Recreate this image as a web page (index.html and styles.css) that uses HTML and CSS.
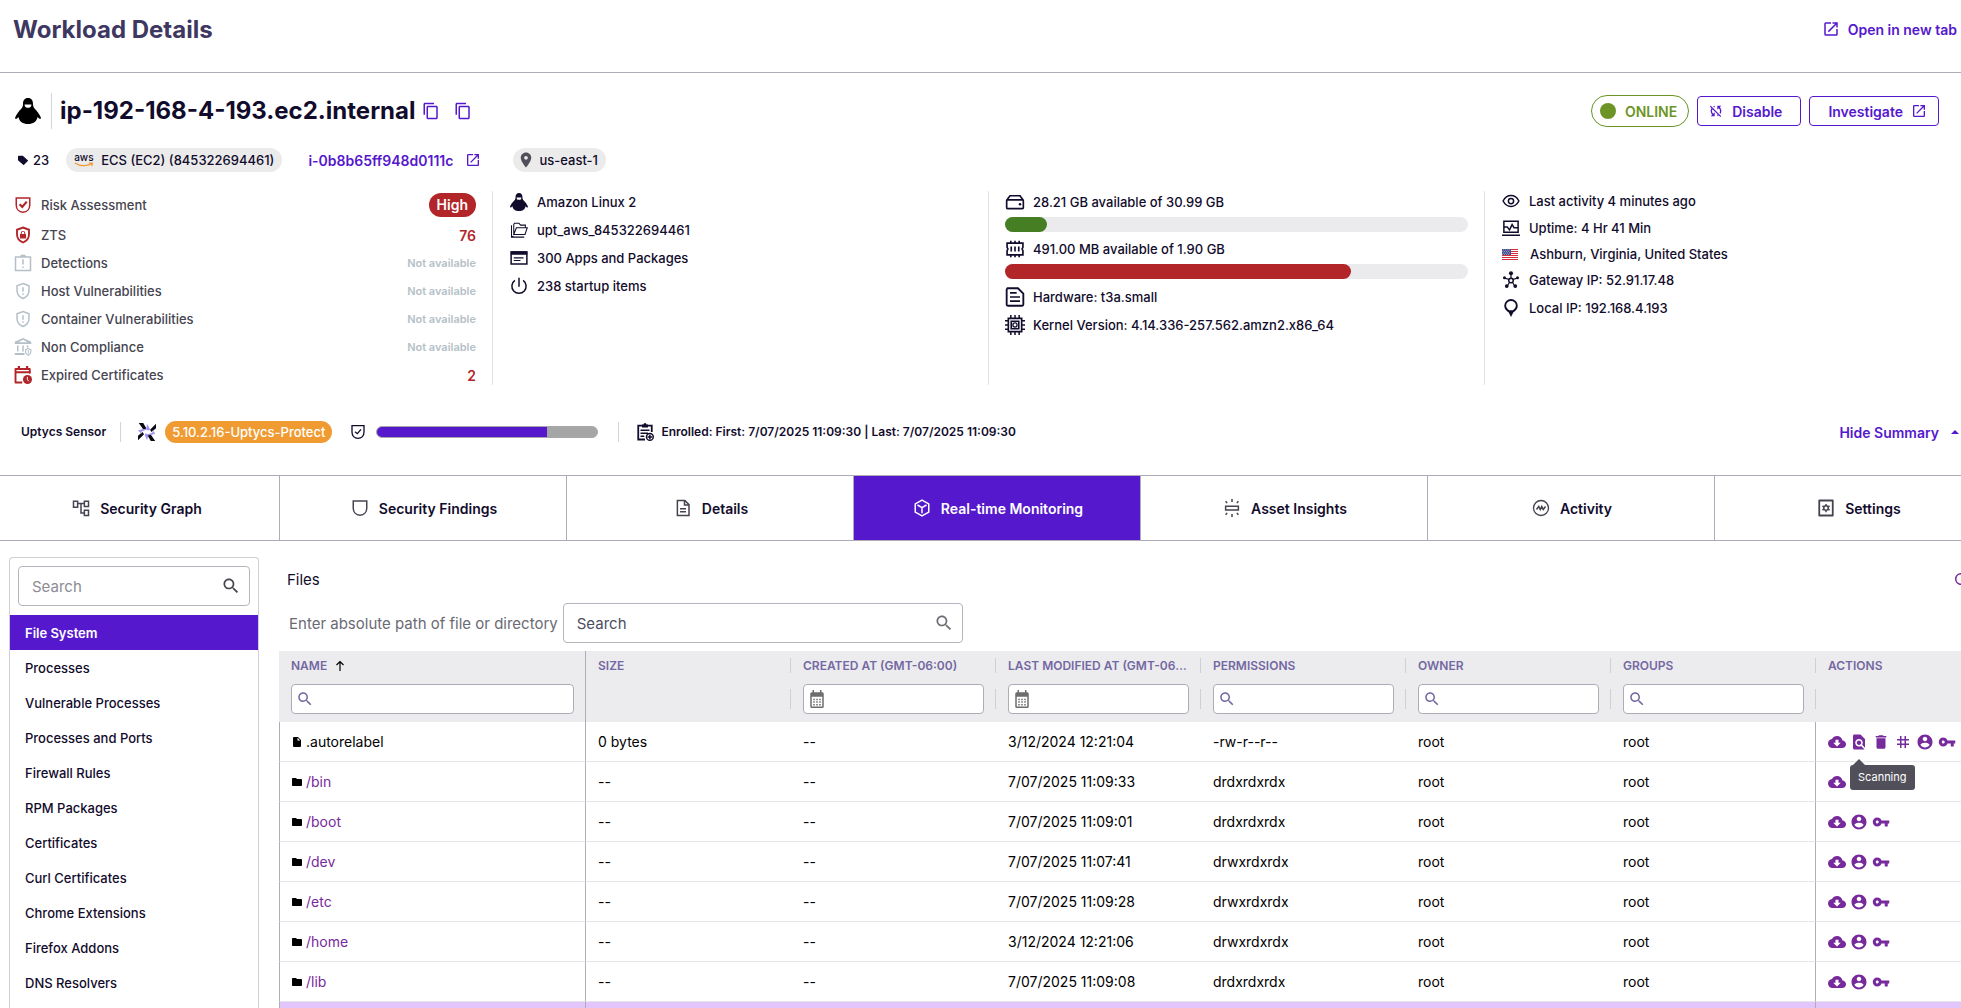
FILE: index.html
```html
<!DOCTYPE html>
<html lang="en">
<head>
  <meta charset="UTF-8" />
  <meta name="viewport" content="width=device-width, initial-scale=1.0" />
  <title>Workload Details</title>
  <link rel="stylesheet" href="styles.css">
</head>
<body>

  <!-- Icon set -->
  <svg class="sprite" aria-hidden="true">
    <symbol id="i-open" viewBox="0 0 24 24"><path d="M19 19H5V5h7V3H5a2 2 0 00-2 2v14a2 2 0 002 2h14c1.1 0 2-.9 2-2v-7h-2v7zM14 3v2h3.59l-9.83 9.83 1.41 1.41L19 6.41V10h2V3h-7z"/></symbol>
    <symbol id="i-copy" viewBox="0 0 24 24"><path d="M16 1H4c-1.1 0-2 .9-2 2v14h2V3h12V1zm3 4H8c-1.1 0-2 .9-2 2v14c0 1.1.9 2 2 2h11c1.1 0 2-.9 2-2V7c0-1.1-.9-2-2-2zm0 16H8V7h11v14z"/></symbol>
    <symbol id="i-search" viewBox="0 0 24 24"><path d="M15.5 14h-.79l-.28-.27C15.41 12.59 16 11.11 16 9.5 16 5.91 13.09 3 9.5 3S3 5.91 3 9.5 5.91 16 9.5 16c1.61 0 3.09-.59 4.23-1.57l.27.28v.79l5 4.99L20.49 19l-4.99-5zm-6 0C7.01 14 5 11.99 5 9.5S7.01 5 9.5 5 14 7.01 14 9.5 11.99 14 9.5 14z"/></symbol>
    <symbol id="i-linux" viewBox="0 0 26 26"><path fill-rule="evenodd" d="M13 0C9.500 0 8 2.500 8 6c0 2-.5 3-1.500 4.500C4 13 1 16.500 0 20c0 1 1 1 2 .5l1.500-1.500C4 23.500 8 26 13 26s9-2.500 9.500-7l1.500 1.500c1 .5 2 .5 2-.5-1-3.500-4-7-6.500-9.500C18.500 9 18 8 18 6c0-3.500-1.500-6-5-6zM9.500 6.500h7L16 8.500c-1 1.700-5 1.700-6 0z"/></symbol>
    <symbol id="i-tag" viewBox="0 0 16 16"><path d="M1 2h6l8 7-6 6-8-7z" stroke="currentColor" stroke-width="2" stroke-linejoin="round"/></symbol>
    <symbol id="i-pin" viewBox="0 0 24 24"><path d="M12 2C8.130 2 5 5.130 5 9c0 5.250 7 13 7 13s7-7.750 7-13c0-3.870-3.130-7-7-7zm0 9.500c-1.380 0-2.500-1.120-2.500-2.500s1.120-2.500 2.500-2.500 2.500 1.120 2.500 2.500-1.120 2.500-2.500 2.500z"/></symbol>
    <symbol id="i-sync-off" viewBox="0 0 24 24"><path d="M10 6.350V4.260c-.8.210-1.550.540-2.230.960l1.460 1.460c.25-.12.500-.240.770-.330zm-7.140-.94l2.360 2.360A7.930 7.930 0 004 12c0 2.210.91 4.200 2.360 5.640L4 20h6v-6l-2.240 2.240A6.003 6.003 0 016 12c0-1 .25-1.940.68-2.770l8.080 8.080c-.25.130-.5.250-.77.340v2.090c.8-.21 1.550-.54 2.230-.96l2.360 2.360 1.270-1.270L4.140 4.140 2.860 5.410zM20 4h-6v6l2.240-2.240A6.003 6.003 0 0118 12c0 1-.25 1.940-.68 2.770l1.460 1.460A7.930 7.930 0 0020 12c0-2.210-.91-4.200-2.360-5.640L20 4z"/></symbol>
    <symbol id="i-shield-square" viewBox="0 0 24 24"><path d="M3 2.500h18v9.500c0 5.500-3.500 9.500-9 9.500s-9-4-9-9.500z" fill="none" stroke="currentColor" stroke-width="2"/></symbol>
    <symbol id="i-risk" viewBox="0 0 24 24"><path d="M3 2.500h18v9.500c0 5.500-3.500 9.500-9 9.500s-9-4-9-9.500z" fill="none" stroke="currentColor" stroke-width="2"/><path d="M7.500 11l3.500 3.500 6-7" fill="none" stroke="currentColor" stroke-width="3"/></symbol>
    <symbol id="i-shield-lock" viewBox="0 0 24 24"><path d="M12 2l8 3v6c0 5-3.300 9-8 11-4.700-2-8-6-8-11V5z" fill="none" stroke="currentColor" stroke-width="2.500"/><path fill-rule="evenodd" d="M8 10.500h1V9.500a3 3 0 016 0v1h1v6H8zM10.300 10.500h3.400V9.500a1.700 1.700 0 00-3.400 0z"/></symbol>
    <symbol id="i-shield-alert" viewBox="0 0 24 24"><path d="M12 2l8 3v6c0 5-3.300 9-8 11-4.700-2-8-6-8-11V5z" fill="none" stroke="currentColor" stroke-width="2"/><path d="M11 7h2v6h-2zM11 15h2v2h-2z"/></symbol>
    <symbol id="i-detect" viewBox="0 0 24 24"><path d="M2 4h20v18H2z" fill="none" stroke="currentColor" stroke-width="2"/><path d="M8 4l1-3h6l1 3zM11 7h2v7h-2zM11 16.500h2v2h-2z"/></symbol>
    <symbol id="i-bank" viewBox="0 0 24 24"><path fill-rule="evenodd" d="M12 0l11 5v3H1V5zm0 2.200L6 5.500h12zM4 10h2v8H4zM11 10h2v8h-2zM17 10h2v3h-2zM1 20h13v2.500H1z"/><path d="M19 14l3.500 1.500v3c0 2-1.500 3.500-3.500 4.500-2-1-3.500-2.500-3.500-4.500v-3z" fill="none" stroke="currentColor" stroke-width="1.500"/><path d="M18.500 16h1.200v5h-1.200z"/></symbol>
    <symbol id="i-cert" viewBox="0 0 24 24"><path d="M21 10V4H2v18h9" fill="none" stroke="currentColor" stroke-width="2.500" stroke-linejoin="round"/><path d="M5 0h3v4H5zM16 0h3v4h-3zM2 7h20v2.500H2z"/><circle cx="18" cy="18" r="6"/><path d="M17.800 14.500v3.800l2 2" fill="none" stroke="#fff" stroke-width="1.300"/></symbol>
    <symbol id="i-folders" viewBox="0 0 24 24"><path d="M4.500 20L2 21.500V5.500M2 21.500h17M5 18V4.500L6 3h6l2 2.500h6.500V9M5 18L8.500 9H23l-3 9z" fill="none" stroke="currentColor" stroke-width="1.400"/></symbol>
    <symbol id="i-apps" viewBox="0 0 24 24"><path d="M1.500 4h21v16h-21z" fill="none" stroke="currentColor" stroke-width="2"/><path d="M1 3h22v4.500H1zM5 11h13v1.600H5zM5 14.500h9v1.600H5z"/></symbol>
    <symbol id="i-power" viewBox="0 0 24 24"><path d="M6.500 4.500a9.500 9.500 0 1011 0M12 1v12" fill="none" stroke="currentColor" stroke-width="2"/></symbol>
    <symbol id="i-disk" viewBox="0 0 24 24"><path d="M2 10l4-5.500h12L22 10M3 9.500h18a1 1 0 011 1V19a1 1 0 01-1 1H3a1 1 0 01-1-1v-8.500a1 1 0 011-1z" fill="none" stroke="currentColor" stroke-width="2"/><circle cx="18" cy="14.800" r="1.500"/></symbol>
    <symbol id="i-memory" viewBox="0 0 24 24"><path d="M2.500 5h19v5l-1 2 1 2v5h-19v-5l1-2-1-2zM7 2v3M12 2v3M17 2v3M7 19v3M12 19v3M17 19v3M7.500 9v6M12 9v6M16.500 9v6" fill="none" stroke="currentColor" stroke-width="2"/></symbol>
    <symbol id="i-doc" viewBox="0 0 24 24"><path d="M3 1.500h12.500L22 8v13a1.500 1.500 0 01-1.500 1.500h-17A1.500 1.500 0 012 21V3z" fill="none" stroke="currentColor" stroke-width="2.200"/><path d="M6 7h8M6 12h12M6 17h12" stroke="currentColor" stroke-width="2"/></symbol>
    <symbol id="i-chip" viewBox="0 0 24 24"><path d="M4 4h16v16H4zM7.500 7.500h9v9h-9z" fill="none" stroke="currentColor" stroke-width="2"/><circle cx="12" cy="12" r="2.500" fill="none" stroke="currentColor" stroke-width="1.500"/><path d="M7 0v4M12 0v4M17 0v4M7 20v4M12 20v4M17 20v4M0 7h4M0 12h4M0 17h4M20 7h4M20 12h4M20 17h4" stroke="currentColor" stroke-width="1.800"/></symbol>
    <symbol id="i-eye" viewBox="0 0 24 24"><path d="M1.500 12C4 7 8 4.800 12 4.800S20 7 22.500 12C20 17 16 19.200 12 19.200S4 17 1.500 12z" fill="none" stroke="currentColor" stroke-width="2"/><circle cx="12" cy="12" r="3.500" fill="none" stroke="currentColor" stroke-width="2"/></symbol>
    <symbol id="i-uptime" viewBox="0 0 24 24"><path d="M2.500 3h19v14.500h-19zM3 10.500h4l3 4 3.500-7 2.500 4h5M0 21.500h24" fill="none" stroke="currentColor" stroke-width="2"/></symbol>
    <symbol id="i-hub" viewBox="0 0 24 24"><path d="M12 12V3M12 12L3.500 9.500M12 12l8.500-2.500M12 12l-5 8M12 12l5 8" stroke="currentColor" stroke-width="1.600"/><circle cx="12" cy="3" r="2.700"/><circle cx="3.300" cy="9" r="2"/><circle cx="20.700" cy="9" r="2"/><circle cx="6.300" cy="20" r="2.500"/><circle cx="17.700" cy="20" r="2.500"/><circle cx="12" cy="12.500" r="3" fill="#fff" stroke="currentColor" stroke-width="2"/></symbol>
    <symbol id="i-marker" viewBox="0 0 24 24"><path fill-rule="evenodd" d="M12 0a9 9 0 00-9 9c0 4.500 3 7 6 9l3 6 3-6c3-2 6-4.500 6-9a9 9 0 00-9-9zm0 2.500a6.500 6.500 0 016.500 6.500c0 2.500-2 4.500-4 6h-5c-2-1.500-4-3.500-4-6A6.500 6.500 0 0112 2.500z"/></symbol>
    <symbol id="i-flag" viewBox="0 0 16 11"><path fill="#fff" d="M0 0h16v11H0z"/><path fill="#d22f3a" d="M0 0h16v1H0zM0 2h16v1H0zM0 4h16v1H0zM0 6h16v1H0zM0 8h16v1H0zM0 10h16v1H0z"/><path fill="#46508f" d="M0 0h9v6H0z"/><path stroke="#aab0d6" stroke-width=".8" stroke-dasharray="1 1" d="M1 1h8M0 2.500h8M1 4h8M0 5.300h8"/></symbol>
    <symbol id="i-sensor" viewBox="0 0 24 24"><path fill="#0b0a12" d="M1 0h6l4 7-3 3zM24 1v6l-6 5-2-3zM0 23v-6l6-5 2 3zM23 24h-6l-4-7 3-3z"/><path fill="#a395f5" d="M12 1l4 7-1 2-5-1-6 3 1 3-5-5 6-2h5zM12 23l-3-7 1-2 5 1 5-3-1-3 4 5-5 2h-4z"/></symbol>
    <symbol id="i-shield-check" viewBox="0 0 24 24"><path d="M3 2.500h18v9.500c0 5.500-3.500 9.500-9 9.500s-9-4-9-9.500z" fill="none" stroke="currentColor" stroke-width="2"/><path d="M7.500 11.500l3.500 3 5.500-6.500" fill="none" stroke="currentColor" stroke-width="2"/></symbol>
    <symbol id="i-enroll" viewBox="0 0 24 24"><path d="M21 12V3.500H3V22h9" fill="none" stroke="currentColor" stroke-width="2.400"/><path d="M8 4V2h2a2 2 0 014 0h2v4H8zM6 8.500h12v2H6zM6 12.500h10v2H6zM6 16.500h5v2H6z"/><circle cx="18.500" cy="18.500" r="4.500" fill="#fff" stroke="currentColor" stroke-width="2"/><path d="M18.500 15.500v6M15.500 18.500h6" stroke="currentColor" stroke-width="2"/></symbol>
    <symbol id="i-graph" viewBox="0 0 24 24"><path d="M2 3h5.500v8H2zM16.500 3H22v7h-5.500zM16.500 15H22v7h-5.500zM7.500 6h9M12 6v12.500h4.500" fill="none" stroke="currentColor" stroke-width="2"/></symbol>
    <symbol id="i-file" viewBox="0 0 24 24"><path d="M4.500 2h10l5.500 5.500V22H4.500zM14 2v6h6M8 13h8M8 17h8" fill="none" stroke="currentColor" stroke-width="2"/></symbol>
    <symbol id="i-cube" viewBox="0 0 24 24"><path d="M12 1.500l9 5v11l-9 5-9-5v-11zM6 8l6 3.500L18 8M12 11.500V19" fill="none" stroke="currentColor" stroke-width="2" stroke-linejoin="round"/></symbol>
    <symbol id="i-insight" viewBox="0 0 24 24"><path d="M3.500 9.500h17v5h-17zM12 0v4M12 20v4M3.500 3l2 2.500M20.500 3l-2 2.500M3.500 21l2-2.500M20.500 21l-2-2.500" fill="none" stroke="currentColor" stroke-width="2"/></symbol>
    <symbol id="i-activity" viewBox="0 0 24 24"><circle cx="12" cy="12" r="10" fill="none" stroke="currentColor" stroke-width="1.800"/><path d="M6 14l3-4 2 4 2-4 2 4 3-4" fill="none" stroke="currentColor" stroke-width="2"/></symbol>
    <symbol id="i-settings" viewBox="0 0 24 24"><path d="M3 2h18v20H3z" fill="none" stroke="currentColor" stroke-width="2.400" stroke-linejoin="round"/><circle cx="12" cy="12" r="3" fill="none" stroke="currentColor" stroke-width="2"/><path d="M12 6.500v2M12 15.500v2M7.200 9.300l1.800 1M15 13.700l1.800 1M7.200 14.700l1.800-1M15 10.300l1.800-1" stroke="currentColor" stroke-width="2"/></symbol>
    <symbol id="i-calendar" viewBox="0 0 24 24"><path fill-rule="evenodd" d="M6 0h2v3h8V0h2v3h1a2 2 0 012 2v17a2 2 0 01-2 2H5a2 2 0 01-2-2V5a2 2 0 012-2h1zM5 9v13h14V9z"/><path d="M7 12.500h10M7 16h10M7 19.500h10" stroke="currentColor" stroke-width="2" stroke-dasharray="2 2"/></symbol>
    <symbol id="i-up" viewBox="0 0 24 24"><path d="M12 22V4M5 10l7-7 7 7" fill="none" stroke="currentColor" stroke-width="2.400"/></symbol>
    <symbol id="i-page" viewBox="0 0 24 24"><path fill-rule="evenodd" d="M6 2h8l6 6v12a2 2 0 01-2 2H6a2 2 0 01-2-2V4a2 2 0 012-2zm7 1.500V9h5.500z"/></symbol>
    <symbol id="i-folder" viewBox="0 0 24 24"><path d="M10 4H4c-1.100 0-1.990.9-1.990 2L2 18c0 1.100.9 2 2 2h16c1.100 0 2-.9 2-2V8c0-1.100-.9-2-2-2h-8l-2-2z"/></symbol>
    <symbol id="i-download" viewBox="0 0 24 24"><path d="M19.350 10.040C18.670 6.590 15.640 4 12 4 9.110 4 6.600 5.640 5.350 8.040 2.340 8.360 0 10.910 0 14c0 3.310 2.690 6 6 6h13c2.760 0 5-2.240 5-5 0-2.640-2.050-4.780-4.650-4.960zM17 13l-5 5-5-5h3V9h4v4h3z"/></symbol>
    <symbol id="i-scan" viewBox="0 0 24 24"><path d="M20 19.590V8l-6-6H6c-1.100 0-1.990.9-1.990 2L4 20c0 1.100.89 2 1.990 2H18c.45 0 .85-.15 1.190-.4l-4.430-4.430c-.8.52-1.740.83-2.760.83-2.760 0-5-2.240-5-5s2.240-5 5-5 5 2.240 5 5c0 1.020-.31 1.960-.83 2.750L20 19.590zM9 13c0 1.660 1.340 3 3 3s3-1.340 3-3-1.340-3-3-3-3 1.340-3 3z"/></symbol>
    <symbol id="i-trash" viewBox="0 0 24 24"><path d="M6 19c0 1.100.9 2 2 2h8c1.100 0 2-.9 2-2V7H6v12zM19 4h-3.500l-1-1h-5l-1 1H5v2h14V4z"/></symbol>
    <symbol id="i-hash" viewBox="0 0 24 24"><path d="M20 10V8h-4V4h-2v4h-4V4H8v4H4v2h4v4H4v2h4v4h2v-4h4v4h2v-4h4v-2h-4v-4h4zm-6 4h-4v-4h4v4z"/></symbol>
    <symbol id="i-user" viewBox="0 0 24 24"><path d="M12 2C6.480 2 2 6.480 2 12s4.480 10 10 10 10-4.480 10-10S17.520 2 12 2zm0 3c1.660 0 3 1.340 3 3s-1.340 3-3 3-3-1.340-3-3 1.340-3 3-3zm0 14.200c-2.500 0-4.710-1.280-6-3.220.03-1.990 4-3.080 6-3.080 1.990 0 5.970 1.090 6 3.080-1.290 1.940-3.500 3.220-6 3.220z"/></symbol>
    <symbol id="i-key" viewBox="0 0 24 24"><path d="M12.650 10C11.830 7.670 9.610 6 7 6c-3.310 0-6 2.690-6 6s2.690 6 6 6c2.610 0 4.830-1.670 5.650-4H17v4h4v-4h2v-4H12.650zM7 14c-1.100 0-2-.9-2-2s.9-2 2-2 2 .9 2 2-.9 2-2 2z"/></symbol>
    <symbol id="i-refresh" viewBox="0 0 24 24"><path d="M17.650 6.350A8 8 0 1019.730 14h-2.080A6 6 0 1112 6c1.660 0 3.140.69 4.220 1.780L13 11h7V4z"/></symbol>
  </svg>

  <header class="page-header">
    <h1>Workload Details</h1>
    <a class="open-tab" href="#"><svg class="icon"><use href="#i-open"/></svg>Open in new tab</a>
  </header>

  <section class="host">
    <div class="host-row">
      <svg class="icon host-os"><use href="#i-linux"/></svg>
      <h2>ip-192-168-4-193.ec2.internal</h2>
      <button class="icon-btn" aria-label="Copy host name"><svg class="icon"><use href="#i-copy"/></svg></button>
      <button class="icon-btn" aria-label="Copy host id"><svg class="icon"><use href="#i-copy"/></svg></button>
      <div class="host-actions">
        <span class="status"><span class="dot"></span>ONLINE</span>
        <button class="btn btn-disable"><svg class="icon"><use href="#i-sync-off"/></svg>Disable</button>
        <button class="btn btn-investigate">Investigate<svg class="icon"><use href="#i-open"/></svg></button>
      </div>
    </div>
    <div class="meta-row">
      <span class="tags"><svg class="icon"><use href="#i-tag"/></svg>23</span>
      <span class="chip">
        <span class="aws">aws<svg viewBox="0 0 20 5"><path d="M1 1c5 3.500 12 3.500 17 .5M15 .8l3.500.4L17.500 4" fill="none" stroke="#f19a33" stroke-width="1.300"/></svg></span>
        ECS (EC2) (845322694461)
      </span>
      <a class="instance" href="#">i-0b8b65ff948d0111c<svg class="icon"><use href="#i-open"/></svg></a>
      <span class="chip region"><svg class="icon"><use href="#i-pin"/></svg>us-east-1</span>
    </div>
  </section>

  <section class="summary">
    <ul class="summary-col risks">
      <li class="red"><svg class="icon"><use href="#i-risk"/></svg><span>Risk Assessment</span><b class="badge">High</b></li>
      <li class="red"><svg class="icon"><use href="#i-shield-lock"/></svg><span>ZTS</span><b>76</b></li>
      <li><svg class="icon"><use href="#i-detect"/></svg><span>Detections</span><em>Not available</em></li>
      <li><svg class="icon"><use href="#i-shield-alert"/></svg><span>Host Vulnerabilities</span><em>Not available</em></li>
      <li><svg class="icon"><use href="#i-shield-alert"/></svg><span>Container Vulnerabilities</span><em>Not available</em></li>
      <li><svg class="icon"><use href="#i-bank"/></svg><span>Non Compliance</span><em>Not available</em></li>
      <li class="red"><svg class="icon"><use href="#i-cert"/></svg><span>Expired Certificates</span><b>2</b></li>
    </ul>
    <ul class="summary-col system">
      <li><svg class="icon"><use href="#i-linux"/></svg>Amazon Linux 2</li>
      <li><svg class="icon"><use href="#i-folders"/></svg>upt_aws_845322694461</li>
      <li><svg class="icon"><use href="#i-apps"/></svg>300 Apps and Packages</li>
      <li><svg class="icon"><use href="#i-power"/></svg>238 startup items</li>
    </ul>
    <ul class="summary-col hardware">
      <li class="usage"><svg class="icon"><use href="#i-disk"/></svg>28.21 GB available of 30.99 GB</li>
      <li class="meter"><div class="meter-fill green" style="width: 9%"></div></li>
      <li class="usage"><svg class="icon"><use href="#i-memory"/></svg>491.00 MB available of 1.90 GB</li>
      <li class="meter"><div class="meter-fill" style="width: 74.7%"></div></li>
      <li><svg class="icon"><use href="#i-doc"/></svg>Hardware: t3a.small</li>
      <li><svg class="icon"><use href="#i-chip"/></svg>Kernel Version: 4.14.336-257.562.amzn2.x86_64</li>
    </ul>
    <ul class="summary-col network">
      <li><svg class="icon"><use href="#i-eye"/></svg>Last activity 4 minutes ago</li>
      <li><svg class="icon"><use href="#i-uptime"/></svg>Uptime: 4 Hr 41 Min</li>
      <li class="location"><svg class="icon"><use href="#i-flag"/></svg>Ashburn, Virginia, United States</li>
      <li><svg class="icon"><use href="#i-hub"/></svg>Gateway IP: 52.91.17.48</li>
      <li><svg class="icon"><use href="#i-marker"/></svg>Local IP: 192.168.4.193</li>
    </ul>
  </section>

  <section class="sensor">
    <span class="sensor-name">Uptycs Sensor</span>
    <svg class="icon sensor-logo"><use href="#i-sensor"/></svg>
    <span class="version">5.10.2.16-Uptycs-Protect</span>
    <svg class="icon sensor-shield"><use href="#i-shield-check"/></svg>
    <div class="coverage"><div class="coverage-fill" style="width: 77%"></div></div>
    <span class="enrolled"><svg class="icon"><use href="#i-enroll"/></svg>Enrolled: First: 7/07/2025 11:09:30 | Last: 7/07/2025 11:09:30</span>
    <button class="hide-summary">Hide Summary<span class="caret"></span></button>
  </section>

  <nav class="tabs">
    <a href="#"><svg class="icon"><use href="#i-graph"/></svg>Security Graph</a>
    <a href="#"><svg class="icon"><use href="#i-shield-square"/></svg>Security Findings</a>
    <a href="#"><svg class="icon"><use href="#i-file"/></svg>Details</a>
    <a href="#" class="active"><svg class="icon"><use href="#i-cube"/></svg>Real-time Monitoring</a>
    <a href="#"><svg class="icon"><use href="#i-insight"/></svg>Asset Insights</a>
    <a href="#"><svg class="icon"><use href="#i-activity"/></svg>Activity</a>
    <a href="#"><svg class="icon"><use href="#i-settings"/></svg>Settings</a>
  </nav>

  <main class="content">
    <aside class="sidebar">
      <label class="search-box side-search">
        <input type="text" placeholder="Search" aria-label="Search categories">
        <svg class="icon"><use href="#i-search"/></svg>
      </label>
      <a href="#" class="active">File System</a>
      <a href="#">Processes</a>
      <a href="#">Vulnerable Processes</a>
      <a href="#">Processes and Ports</a>
      <a href="#">Firewall Rules</a>
      <a href="#">RPM Packages</a>
      <a href="#">Certificates</a>
      <a href="#">Curl Certificates</a>
      <a href="#">Chrome Extensions</a>
      <a href="#">Firefox Addons</a>
      <a href="#">DNS Resolvers</a>
    </aside>

    <section class="files">
      <div class="files-head">
        <h3>Files</h3>
        <button class="icon-btn refresh" aria-label="Refresh"><svg class="icon"><use href="#i-refresh"/></svg></button>
      </div>
      <div class="path-row">
        <label for="path">Enter absolute path of file or directory</label>
        <div class="search-box">
          <input type="text" id="path" placeholder="Search">
          <svg class="icon"><use href="#i-search"/></svg>
        </div>
      </div>

      <table>
        <colgroup>
          <col class="col-name"><col class="col"><col class="col"><col class="col"><col class="col"><col class="col"><col class="col"><col>
        </colgroup>
        <thead>
          <tr class="titles">
            <th><div>NAME<svg class="icon"><use href="#i-up"/></svg></div></th>
            <th><div>SIZE</div></th>
            <th><div>CREATED AT (GMT-06:00)</div></th>
            <th><div>LAST MODIFIED AT (GMT-06:00)</div></th>
            <th><div>PERMISSIONS</div></th>
            <th><div>OWNER</div></th>
            <th><div>GROUPS</div></th>
            <th><div>ACTIONS</div></th>
          </tr>
          <tr class="filters">
            <td><div><label><svg class="icon"><use href="#i-search"/></svg><input type="text" aria-label="Filter name"></label></div></td>
            <td><div></div></td>
            <td><div><label class="date"><svg class="icon"><use href="#i-calendar"/></svg><input type="text" aria-label="Filter created"></label></div></td>
            <td><div><label class="date"><svg class="icon"><use href="#i-calendar"/></svg><input type="text" aria-label="Filter modified"></label></div></td>
            <td><div><label><svg class="icon"><use href="#i-search"/></svg><input type="text" aria-label="Filter permissions"></label></div></td>
            <td><div><label><svg class="icon"><use href="#i-search"/></svg><input type="text" aria-label="Filter owner"></label></div></td>
            <td><div><label><svg class="icon"><use href="#i-search"/></svg><input type="text" aria-label="Filter groups"></label></div></td>
            <td><div></div></td>
          </tr>
        </thead>
        <tbody>
          <tr>
            <td><svg class="icon"><use href="#i-page"/></svg>.autorelabel</td><td>0 bytes</td><td>--</td><td>3/12/2024 12:21:04</td><td>-rw-r--r--</td><td>root</td><td>root</td>
            <td><div class="actions">
              <button aria-label="Download"><svg class="icon"><use href="#i-download"/></svg></button>
              <button aria-label="Scan"><svg class="icon"><use href="#i-scan"/></svg><span class="tooltip">Scanning</span></button>
              <button aria-label="Delete"><svg class="icon"><use href="#i-trash"/></svg></button>
              <button aria-label="Hash"><svg class="icon"><use href="#i-hash"/></svg></button>
              <button aria-label="Owner"><svg class="icon"><use href="#i-user"/></svg></button>
              <button aria-label="Permissions"><svg class="icon"><use href="#i-key"/></svg></button>
            </div></td>
          </tr>
          <tr>
            <td><svg class="icon"><use href="#i-folder"/></svg><a href="#">/bin</a></td><td>--</td><td>--</td><td>7/07/2025 11:09:33</td><td>drdxrdxrdx</td><td>root</td><td>root</td>
            <td><div class="actions"><button aria-label="Download"><svg class="icon"><use href="#i-download"/></svg></button><button aria-label="Owner"><svg class="icon"><use href="#i-user"/></svg></button><button aria-label="Permissions"><svg class="icon"><use href="#i-key"/></svg></button></div></td>
          </tr>
          <tr>
            <td><svg class="icon"><use href="#i-folder"/></svg><a href="#">/boot</a></td><td>--</td><td>--</td><td>7/07/2025 11:09:01</td><td>drdxrdxrdx</td><td>root</td><td>root</td>
            <td><div class="actions"><button aria-label="Download"><svg class="icon"><use href="#i-download"/></svg></button><button aria-label="Owner"><svg class="icon"><use href="#i-user"/></svg></button><button aria-label="Permissions"><svg class="icon"><use href="#i-key"/></svg></button></div></td>
          </tr>
          <tr>
            <td><svg class="icon"><use href="#i-folder"/></svg><a href="#">/dev</a></td><td>--</td><td>--</td><td>7/07/2025 11:07:41</td><td>drwxrdxrdx</td><td>root</td><td>root</td>
            <td><div class="actions"><button aria-label="Download"><svg class="icon"><use href="#i-download"/></svg></button><button aria-label="Owner"><svg class="icon"><use href="#i-user"/></svg></button><button aria-label="Permissions"><svg class="icon"><use href="#i-key"/></svg></button></div></td>
          </tr>
          <tr>
            <td><svg class="icon"><use href="#i-folder"/></svg><a href="#">/etc</a></td><td>--</td><td>--</td><td>7/07/2025 11:09:28</td><td>drwxrdxrdx</td><td>root</td><td>root</td>
            <td><div class="actions"><button aria-label="Download"><svg class="icon"><use href="#i-download"/></svg></button><button aria-label="Owner"><svg class="icon"><use href="#i-user"/></svg></button><button aria-label="Permissions"><svg class="icon"><use href="#i-key"/></svg></button></div></td>
          </tr>
          <tr>
            <td><svg class="icon"><use href="#i-folder"/></svg><a href="#">/home</a></td><td>--</td><td>--</td><td>3/12/2024 12:21:06</td><td>drwxrdxrdx</td><td>root</td><td>root</td>
            <td><div class="actions"><button aria-label="Download"><svg class="icon"><use href="#i-download"/></svg></button><button aria-label="Owner"><svg class="icon"><use href="#i-user"/></svg></button><button aria-label="Permissions"><svg class="icon"><use href="#i-key"/></svg></button></div></td>
          </tr>
          <tr>
            <td><svg class="icon"><use href="#i-folder"/></svg><a href="#">/lib</a></td><td>--</td><td>--</td><td>7/07/2025 11:09:08</td><td>drdxrdxrdx</td><td>root</td><td>root</td>
            <td><div class="actions"><button aria-label="Download"><svg class="icon"><use href="#i-download"/></svg></button><button aria-label="Owner"><svg class="icon"><use href="#i-user"/></svg></button><button aria-label="Permissions"><svg class="icon"><use href="#i-key"/></svg></button></div></td>
          </tr>
          <tr class="selected">
            <td></td><td></td><td></td><td></td><td></td><td></td><td></td><td></td>
          </tr>
        </tbody>
      </table>
    </section>
  </main>

</body>
</html>
```
FILE: styles.css
```css
* {
  box-sizing: border-box;
}

body {
  display: flex;
  flex-direction: column;
  height: 100vh;
  margin: 0;
  font-family: 'Inter', 'Liberation Sans', sans-serif;
  font-size: 13px;
  font-weight: 500;
  color: #120c2c;
  background: #fff;
  overflow: hidden;
}

h1, h2, h3, ul {
  margin: 0;
  padding: 0;
}

ul {
  list-style: none;
}

a {
  color: #5518cd;
  text-decoration: none;
}

button {
  font: inherit;
  color: #5518cd;
  background: none;
  border: 0;
  padding: 0;
}

input {
  font: inherit;
  border: 0;
  padding: 0;
  outline: 0;
  background: none;
  width: 100%;
  min-width: 0;
  flex: 1;
}

.sprite {
  display: none;
}

.icon {
  width: 18px;
  height: 18px;
  fill: currentColor;
  flex: none;
}

/* Header */
.page-header {
  display: flex;
  flex: none;
  justify-content: space-between;
  align-items: center;
  height: 73px;
  padding: 0 4px 14px 13px;
  border-bottom: 1px solid #adadb8;
}

.page-header h1 {
  font-size: 24px;
  font-weight: 700;
  color: #3e3761;
}

.open-tab {
  display: flex;
  align-items: center;
  gap: 8px;
  font-size: 14px;
  font-weight: 600;
}

/* Host */
.host {
  flex: none;
  padding: 20px 22px 0 15px;
}

.host-row {
  display: flex;
  align-items: center;
  height: 36px;
}

.host-os {
  width: 26px;
  height: 26px;
  color: #000;
}

.host-row h2 {
  margin-left: 10px;
  padding-left: 8px;
  border-left: 1px solid #d4d4da;
  line-height: 36px;
  font-size: 24px;
  font-weight: 700;
}

.icon-btn {
  display: flex;
  margin-left: 6px;
}

.icon-btn + .icon-btn {
  margin-left: 14px;
}

.host-actions {
  display: flex;
  align-items: center;
  gap: 8px;
  margin-left: auto;
}

.status {
  display: flex;
  align-items: center;
  gap: 9px;
  height: 32px;
  padding: 0 11px 0 8px;
  border: 1px solid #6c9427;
  border-radius: 16px;
  color: #6c9427;
  font-size: 14px;
  font-weight: 600;
}

.dot {
  width: 16px;
  height: 16px;
  border-radius: 50%;
  background: #6c9427;
}

.btn {
  display: flex;
  align-items: center;
  gap: 8px;
  height: 30px;
  border: 1px solid #5518cd;
  border-radius: 4px;
  font-size: 14px;
  font-weight: 600;
}

.btn .icon {
  width: 16px;
  height: 16px;
}

.btn-disable {
  padding: 0 18px 0 10px;
}

.btn-investigate {
  padding: 0 11px 0 18px;
}

.meta-row {
  display: flex;
  align-items: center;
  margin-top: 19px;
  height: 24px;
}

.tags {
  display: flex;
  align-items: center;
  gap: 5px;
  margin: 0 17px 0 3px;
}

.tags .icon {
  width: 10px;
  height: 10px;
}

.chip {
  display: flex;
  align-items: center;
  gap: 7px;
  height: 24px;
  padding: 0 8px;
  border-radius: 12px;
  background: #ebebeb;
}

.aws {
  display: flex;
  flex-direction: column;
  width: 20px;
  font-size: 10px;
  line-height: 9px;
}

.aws svg {
  width: 20px;
  height: 5px;
}

.instance {
  display: flex;
  align-items: center;
  gap: 12px;
  margin: 0 32px 0 26px;
  font-size: 14px;
  font-weight: 600;
}

.instance .icon {
  width: 16px;
  height: 16px;
}

.region {
  padding-left: 4px;
  gap: 4px;
}

.region .icon {
  color: #50505a;
}

/* Summary */
.summary {
  display: grid;
  flex: none;
  grid-template-columns: repeat(4, 1fr);
  grid-template-rows: 194px;
  margin: 19px -20px 0 -3px;
}

.summary-col {
  border-right: 1px solid #e4e4e8;
}

.summary-col:last-child {
  border-right: 0;
}

.summary-col li {
  display: flex;
  align-items: center;
  height: 28px;
}

.risks {
  padding: 0 16px 0 17px;
}

.risks li {
  gap: 9px;
  color: #b5bfc8;
}

.risks li:first-child {
  height: 28px;
  margin-bottom: 2px;
}

.risks span {
  flex: 1;
  color: #45444f;
}

.risks .red {
  color: #b22529;
}

.risks em {
  font-size: 11px;
  font-style: normal;
  font-weight: 600;
}

.risks b {
  font-size: 14px;
  font-weight: 600;
}

.risks .badge {
  height: 24px;
  padding: 0 8px;
  border-radius: 12px;
  line-height: 24px;
  color: #fff;
  background: #b22529;
}

.system {
  padding: 0 17px;
}

.system li {
  gap: 9px;
}

.system li:first-child {
  height: 22px;
  margin-bottom: 3px;
}

.hardware {
  padding: 0 16px;
}

.hardware li {
  gap: 8px;
}

.hardware .usage {
  height: 26px;
  margin-bottom: 2px;
}

.hardware .usage:first-child {
  height: 22px;
  margin-bottom: 4px;
}

.hardware .icon {
  width: 20px;
  height: 20px;
}

.hardware .meter {
  height: 15px;
  margin-bottom: 4px;
  border-radius: 8px;
  background: #ebebed;
}

.meter-fill {
  height: 15px;
  border-radius: 8px;
  background: #b22529;
}

.meter-fill.green {
  background: #467e24;
}

.network {
  padding-left: 17px;
}

.network li {
  gap: 9px;
}

.network li:first-child {
  height: 20px;
  margin-bottom: 3px;
}

.network .location {
  height: 24px;
  gap: 12px;
}

.location .icon {
  width: 16px;
  height: 11px;
}

/* Sensor */
.sensor {
  display: flex;
  flex: none;
  align-items: center;
  height: 90px;
  padding: 4px 0 0 21px;
  font-size: 12px;
  font-weight: 600;
}

.sensor-name,
.coverage {
  flex: none;
}

.sensor-name {
  padding-right: 14px;
  border-right: 1px solid #d4d4da;
  line-height: 20px;
}

.sensor-logo {
  margin: 0 9px 0 17px;
}

.version {
  height: 22px;
  padding: 0 7px;
  border-radius: 11px;
  line-height: 22px;
  font-size: 13px;
  font-weight: 500;
  color: #fff;
  background: #f09b32;
}

.sensor-shield {
  width: 16px;
  height: 16px;
  margin: 0 10px 0 18px;
}

.coverage {
  width: 222px;
  height: 12px;
  border: 1px solid #a6a6a6;
  border-radius: 6px;
  background: #a6a6a6;
  overflow: hidden;
}

.coverage-fill {
  height: 10px;
  background: #5518cd;
}

.enrolled {
  display: flex;
  align-items: center;
  gap: 7px;
  margin-left: 20px;
  padding-left: 17px;
  border-left: 1px solid #d4d4da;
  line-height: 20px;
}

.hide-summary {
  display: flex;
  align-items: center;
  gap: 12px;
  margin: 0 2px 0 auto;
  font-size: 14px;
}

.caret {
  border: 4px solid transparent;
  border-top: 0;
  border-bottom-color: #5518cd;
}

/* Tabs */
.tabs {
  display: grid;
  flex: none;
  grid-template-columns: repeat(7, 1fr);
  height: 66px;
  margin: 0 -41px 0 -7px;
  border-top: 1px solid #adadb8;
  border-bottom: 1px solid #adadb8;
}

.tabs a {
  display: flex;
  align-items: center;
  justify-content: center;
  gap: 10px;
  padding-left: 2px;
  border-right: 1px solid #adadb8;
  font-size: 14px;
  font-weight: 600;
  color: #120c2c;
}

.tabs .icon {
  color: #45444f;
}

.tabs .active,
.tabs .active .icon {
  color: #fff;
}

.tabs .active {
  background: #5518cd;
}

/* Content */
.content {
  display: flex;
  flex: 1;
  min-height: 0;
  gap: 20px;
  padding: 16px 0 0 9px;
  overflow: hidden;
}

.sidebar {
  flex: none;
  width: 250px;
  border: 1px solid #cfcfd4;
  border-bottom: 0;
  border-radius: 4px 4px 0 0;
}

.search-box {
  display: flex;
  align-items: center;
  height: 40px;
  padding: 0 8px 0 13px;
  border: 1px solid #b5b5bd;
  border-radius: 4px;
  font-size: 15px;
  font-weight: 400;
}

.search-box .icon {
  width: 20px;
  height: 20px;
  color: #6d6d75;
}

.side-search .icon {
  color: #45444f;
}

.side-search {
  margin: 8px 8px 9px;
}

.search-box input::placeholder {
  color: #4a4f60;
  opacity: 1;
}

.side-search input::placeholder {
  color: #8c8c94;
}

.sidebar a {
  display: block;
  height: 35px;
  padding: 1px 0 0 15px;
  line-height: 35px;
  color: #120c2c;
}

.sidebar .active {
  color: #fff;
  font-weight: 600;
  background: #5518cd;
}

.files {
  flex: 1;
  min-width: 0;
}

.files-head {
  display: flex;
  align-items: center;
  justify-content: space-between;
  height: 46px;
  padding: 0 0 2px 8px;
  margin-right: -9px;
}

.files-head h3 {
  font-size: 15px;
  font-weight: 400;
}

.refresh {
  color: #772a9c;
}

.path-row {
  display: flex;
  align-items: center;
  gap: 5px;
  padding: 0 0 8px 10px;
  font-size: 15px;
  font-weight: 400;
  color: #6a6a73;
}

.path-row .search-box {
  width: 400px;
}

/* Files table */
table {
  width: 100%;
  table-layout: fixed;
  border-spacing: 0;
  font-size: 14px;
  font-weight: 400;
  color: #000;
}

.col-name {
  width: 306px;
}

.col {
  width: 205px;
}

thead {
  background: #ececef;
}

th, td {
  padding: 0;
  text-align: left;
}

.titles th {
  padding: 7px 0 5px;
}

.titles th div {
  height: 15px;
  padding: 0 12px;
  border-left: 1px solid #cfcfd6;
  line-height: 15px;
  font-size: 12px;
  font-weight: 600;
  color: #7468a2;
  white-space: nowrap;
  overflow: hidden;
  text-overflow: ellipsis;
}

.titles .icon {
  width: 12px;
  height: 12px;
  margin-left: 7px;
  vertical-align: -2px;
  color: #000;
}

.filters td {
  padding: 6px 0 8px;
}

.filters td div {
  display: flex;
  align-items: center;
  height: 30px;
  padding-right: 11px;
}

.filters td div::before {
  content: '';
  width: 1px;
  height: 20px;
  background: #cfcfd6;
}

.filters label {
  flex: 1;
  display: flex;
  align-items: center;
  min-width: 0;
  height: 30px;
  margin-left: 12px;
  padding-left: 4px;
  border: 1px solid #adadb8;
  border-radius: 4px;
  background: #fff;
  color: #7468a2;
}

.filters .date {
  color: #6d6d6d;
}

/* frozen column edge */
th:nth-child(2),
td:nth-child(2),
tbody td:first-child,
tbody td:last-child {
  border-left: 1px solid #adadb8;
}

.titles th:first-child div,
.titles th:nth-child(2) div {
  border-left: 0;
}

.filters td:first-child div::before,
.filters td:nth-child(2) div::before {
  display: none;
}

tbody td {
  height: 40px;
  padding: 0 13px;
  border-bottom: 1px solid #e6e6ea;
  white-space: nowrap;
}

tbody td:first-child {
  padding-left: 11px;
}

tbody td:nth-child(2) {
  padding-left: 12px;
}

tbody td:last-child {
  padding: 0 0 0 12px;
}

tbody a {
  color: #772a9c;
}

tbody td > .icon {
  width: 12px;
  height: 12px;
  margin-right: 3px;
  vertical-align: -1px;
}

.selected td {
  background: #e2c5fb;
}

.actions {
  display: flex;
  gap: 4px;
}

.actions button {
  position: relative;
  display: flex;
  color: #772a9c;
}

.tooltip {
  position: absolute;
  z-index: 1;
  top: 32px;
  left: 0;
  height: 25px;
  padding: 0 8px;
  border-radius: 3px;
  line-height: 25px;
  font-size: 11px;
  color: #fff;
  background: #504f5a;
}

.tooltip::before {
  content: '';
  position: absolute;
  top: -6px;
  left: 3px;
  border: 6px solid transparent;
  border-top: 0;
  border-bottom-color: #504f5a;
}
```
